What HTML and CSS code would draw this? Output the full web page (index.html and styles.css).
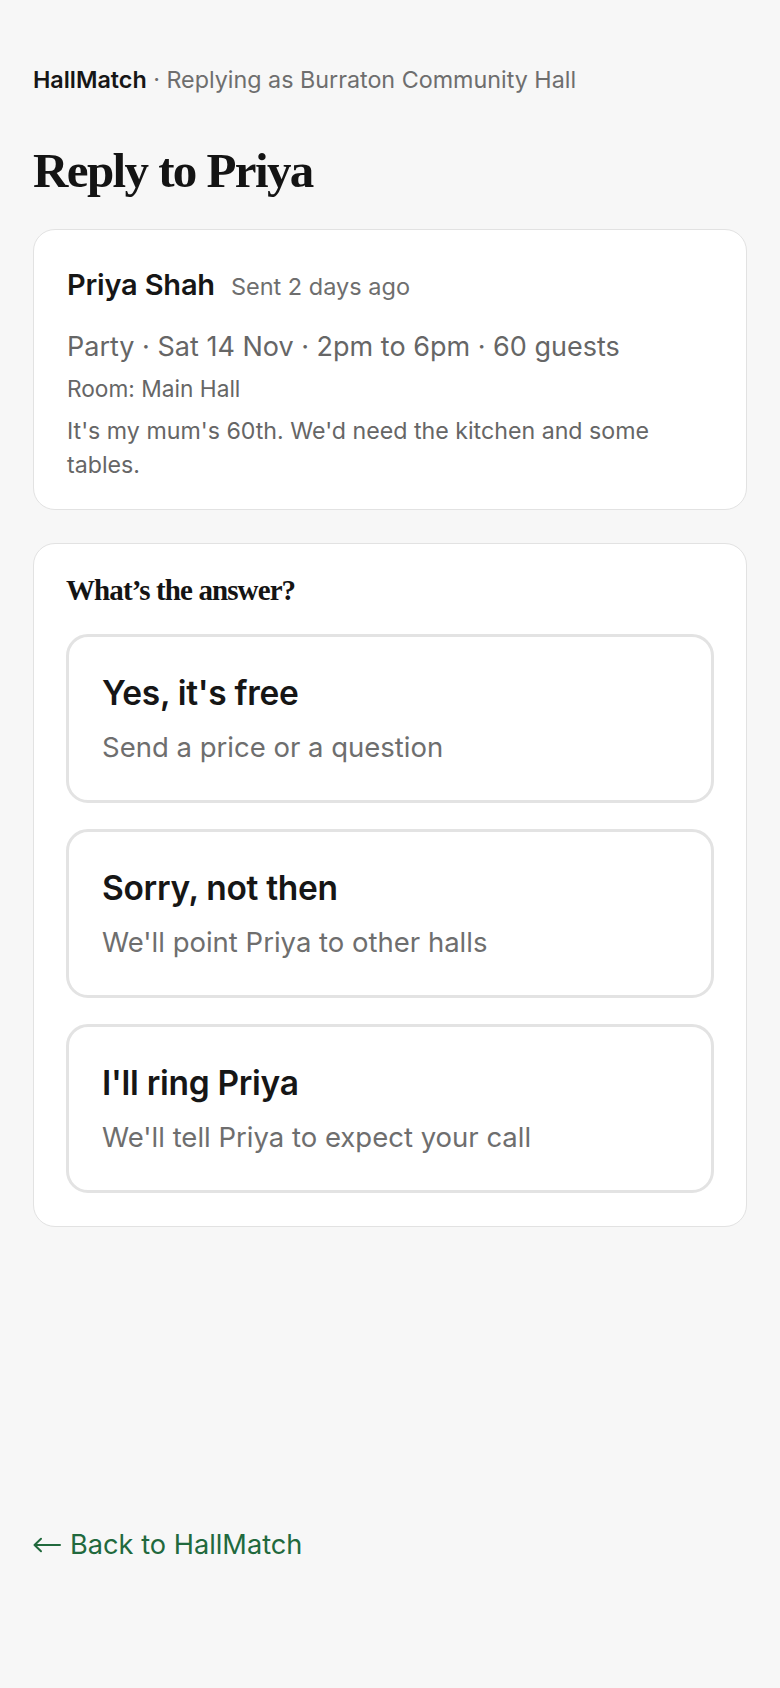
FILE: index.html
```html
<!DOCTYPE html>
<html lang="en">
<head>
<meta charset="utf-8">
<title>Reply to Priya · HallMatch</title>
<link rel="stylesheet" href="styles.css">
</head>
<body>
<div class="page">
  <main class="main">
    <p class="crumb"><span class="brand">HallMatch</span> · Replying as Burraton Community Hall</p>
    <h1 class="title">Reply to Priya</h1>

    <section class="card enquiry">
      <div class="who"><span class="name">Priya Shah</span><span class="sent">Sent 2 days ago</span></div>
      <p class="summary">Party · Sat 14 Nov · 2pm to 6pm · 60 guests</p>
      <p class="room">Room: Main Hall</p>
      <p class="note">It's my mum's 60th. We'd need the kitchen and some tables.</p>
    </section>

    <section class="card answer">
      <h2 class="question">What’s the answer?</h2>
      <div class="options">
        <button class="option" type="button">
          <span class="opt-title">Yes, it's free</span>
          <span class="opt-sub">Send a price or a question</span>
        </button>
        <button class="option" type="button">
          <span class="opt-title">Sorry, not then</span>
          <span class="opt-sub">We'll point Priya to other halls</span>
        </button>
        <button class="option" type="button">
          <span class="opt-title">I'll ring Priya</span>
          <span class="opt-sub">We'll tell Priya to expect your call</span>
        </button>
      </div>
    </section>
  </main>
  <footer class="foot">
    <a class="back" href="#"><svg class="arrow" width="28" height="16" viewBox="0 0 28 16" aria-hidden="true"><path d="M27 8H1.5M8 1.8L1.5 8L8 14.2" fill="none" stroke="currentColor" stroke-width="2" stroke-linecap="round" stroke-linejoin="round"/></svg><span>Back to HallMatch</span></a>
  </footer>
</div>
</body>
</html>
```
FILE: styles.css
```css
* { box-sizing: border-box; }
html, body { margin: 0; padding: 0; }
body {
  background: #f7f7f7;
  color: #161616;
  font-family: "Inter", "Noto Sans", sans-serif;
}
.page {
  min-height: 100vh;
  display: flex;
  flex-direction: column;
  padding: 0 33px;
}
.main { flex: 1; }
.crumb {
  margin: 65px 0 0;
  font-size: 23.3px;
  line-height: 30px;
  color: #6e6e6e;
}
.brand { color: #161616; font-weight: 600; }
.title {
  margin: 48px 0 0;
  font-family: "Liberation Serif", "DejaVu Serif", serif;
  font-weight: 700;
  font-size: 49px;
  line-height: 56px;
  letter-spacing: -1.6px;
  color: #141414;
}
.card {
  background: #fff;
  border: 1px solid #e2e2e2;
  border-radius: 22px;
}
.enquiry {
  margin-top: 30px;
  padding: 38px 33px 27px;
}
.who {
  display: flex;
  align-items: baseline;
  gap: 16px;
  line-height: 34px;
}
.name { font-size: 29px; font-weight: 600; color: #161616; letter-spacing: -0.2px; }
.sent { font-size: 23.5px; color: #6e6e6e; }
.summary {
  margin: 25px 0 0;
  font-size: 27px;
  line-height: 36px;
  color: #666;
}
.room {
  margin: 8px 0 0;
  font-size: 22.7px;
  line-height: 32px;
  color: #666;
}
.note {
  margin: 9px 0 0;
  max-width: 610px;
  font-size: 23.2px;
  line-height: 34px;
  color: #666;
}
.answer {
  margin-top: 33px;
  padding: 30px 32px 33px;
}
.question {
  margin: 0;
  font-family: "Liberation Serif", "DejaVu Serif", serif;
  font-weight: 700;
  font-size: 29px;
  line-height: 32px;
  letter-spacing: -0.9px;
  color: #141414;
}
.options {
  margin-top: 28px;
  display: flex;
  flex-direction: column;
  gap: 26px;
}
.option {
  display: flex;
  flex-direction: column;
  align-items: flex-start;
  gap: 17px;
  width: 100%;
  padding: 36px 33px 36px;
  background: #fff;
  border: 3px solid #e3e3e3;
  border-radius: 22px;
  font-family: inherit;
  text-align: left;
  cursor: pointer;
}
.opt-title {
  font-size: 33.5px;
  line-height: 40px;
  font-weight: 600;
  color: #161616;
  letter-spacing: -0.3px;
}
.opt-sub {
  font-size: 27.5px;
  line-height: 34px;
  color: #6e6e6e;
}
.foot {
  padding: 0 0 126px;
}
.back {
  display: inline-flex;
  align-items: center;
  gap: 9px;
  font-size: 27.2px;
  line-height: 34px;
  color: #21693d;
  text-decoration: none;
}
.arrow { display: block; flex: none; }
```
